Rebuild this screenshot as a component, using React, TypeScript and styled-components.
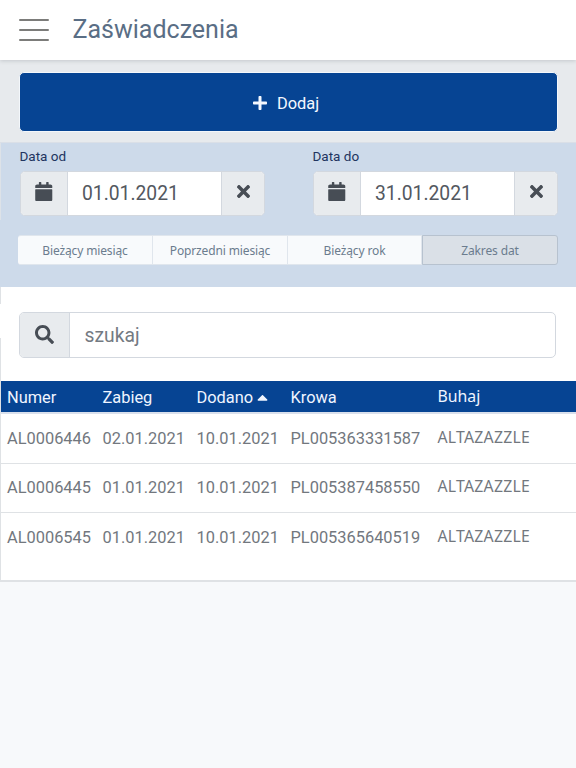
import React from "react";
import styled, { createGlobalStyle } from "styled-components";
import { FaPlus, FaTimes, FaSearch, FaCalendar, FaCaretUp } from "react-icons/fa";

const GlobalStyle = createGlobalStyle`
  *, *::before, *::after { box-sizing: border-box; }
  body {
    margin: 0;
    background: #f7f9fb;
    font-family: Roboto, "Noto Sans", sans-serif;
    color: #72777e;
  }
  button, input { font: inherit; margin: 0; }
`;

const Page = styled.div`
  min-height: 768px;
  overflow: hidden;
`;

const TopBar = styled.header`
  position: relative;
  height: 60px;
  padding-left: 19px;
  display: flex;
  align-items: center;
  gap: 23.5px;
  background: #fff;
  box-shadow: 0 1px 4px rgba(60, 65, 75, 0.2);
`;

const MenuButton = styled.button`
  width: 30px;
  height: 22px;
  padding: 0;
  border: 0;
  background: none;
  display: flex;
  flex-direction: column;
  justify-content: space-between;
`;

const MenuLine = styled.span`
  height: 2.4px;
  border-radius: 1px;
  background: #7c7c7a;
`;

const Title = styled.h1`
  margin: 0 0 1px;
  font-size: 25px;
  line-height: 32px;
  font-weight: 400;
  color: #5a6e85;
`;

const ActionBar = styled.section`
  height: 82px;
  padding: 12px 18px 10px 19px;
  background: #e7eaed;
`;

const AddButton = styled.button`
  width: 100%;
  height: 60px;
  display: flex;
  align-items: center;
  justify-content: center;
  gap: 9px;
  padding: 2px 6px 0 0;
  border: 1px solid #f3f7fb;
  border-radius: 5px;
  background: #064493;
  color: #f4f8ff;
  font-size: 16.4px;
`;

const Filters = styled.section`
  height: 145px;
  padding: 5px 18px 0;
  border-top: 1px solid #dadfe7;
  background:
    linear-gradient(#dde2e8, #dde2e8) 0 0 / 1px 77px no-repeat,
    #cddaea;
`;

const Dates = styled.div`
  display: grid;
  grid-template-columns: 245.5px 245.5px;
  column-gap: 47.5px;
  padding-left: 1.5px;
`;

const DateLabel = styled.label`
  display: block;
  height: 23px;
  line-height: 16px;
  font-size: 13.5px;
  color: #21345f;
`;

const InputGroup = styled.div<{ $tall?: boolean }>`
  display: flex;
  height: ${(p) => (p.$tall ? "46px" : "45px")};
  border: ${(p) => (p.$tall ? "1.5px" : "1px")} solid #d3d8df;
  border-radius: 5px;
  overflow: hidden;
  background: #fff;
`;

const Addon = styled.span<{ $width: number; $lift?: number; $end?: boolean }>`
  flex: 0 0 ${(p) => p.$width}px;
  display: flex;
  align-items: center;
  justify-content: center;
  padding-bottom: ${(p) => p.$lift ?? 0}px;
  background: #e8ebee;
  color: #474d55;
  border-${(p) => (p.$end ? "left" : "right")}: 1px solid #d3d8df;
`;

const Field = styled.input`
  flex: 1;
  min-width: 0;
  padding: 0 14.5px;
  border: 0;
  outline: 0;
  background: transparent;
  color: #53585f;
  font-size: 19.3px;
  &::placeholder { color: #747a82; opacity: 1; }
`;

const Segments = styled.div`
  display: grid;
  grid-template-columns: 135px 135px 134px 136px;
  margin-top: 19px;
  height: 30px;
`;

const Segment = styled.button<{ $active?: boolean }>`
  padding: 1px 0 0;
  font-family: "Noto Sans", "Open Sans", sans-serif;
  font-size: 12px;
  letter-spacing: -0.13px;
  color: #6b7c8e;
  background: ${(p) => (p.$active ? "#dae0e7" : "#f8fafc")};
  border: 1px solid ${(p) => (p.$active ? "#b7c2cf" : "#e0e6ed")};
  border-left-width: ${(p) => (p.$active ? "1px" : "0")};
  &:first-child { border-radius: 3px 0 0 3px; }
  &:last-child { border-radius: 0 3px 3px 0; }
`;

const Results = styled.section`
  height: 295px;
  border-bottom: 2px solid #dfe2e5;
  background:
    linear-gradient(#dfe2e5, #dfe2e5) 0 0 / 1px 17px no-repeat,
    linear-gradient(#dfe2e5, #dfe2e5) 0 51px / 1px 244px no-repeat,
    #fff;
`;

const Search = styled.div`
  padding: 25px 20px 23px 19px;
`;

const Table = styled.table`
  width: 575px;
  margin-left: 1px;
  border-collapse: separate;
  border-spacing: 0;
  table-layout: fixed;
`;

const HeadCell = styled.th<{ $alt?: boolean }>`
  height: 33px;
  padding: ${(p) => (p.$alt ? "0 0 2px 7px" : "2px 0 0 6px")};
  border-bottom: 2px solid #d9e0ec;
  background: #064493;
  color: #f0f5ff;
  text-align: left;
  white-space: nowrap;
  line-height: 20px;
  font-family: ${(p) => (p.$alt ? '"Noto Sans", sans-serif' : "Roboto, sans-serif")};
  font-size: ${(p) => (p.$alt ? "15.8px" : "16.4px")};
  font-weight: 400;
  svg { margin-left: 1px; vertical-align: -3px; }
`;

const Row = styled.tr`
  &:last-child td { border-bottom: 0; }
`;

const Cell = styled.td<{ $alt?: boolean }>`
  height: 49.5px;
  padding: ${(p) => (p.$alt ? "0 0 3px 7px" : "0 0 0 6px")};
  border-bottom: 1px solid #dfe2e5;
  white-space: nowrap;
  font-family: ${(p) => (p.$alt ? '"Noto Sans", sans-serif' : "Roboto, sans-serif")};
  font-size: ${(p) => (p.$alt ? "15.8px" : "16.4px")};
  letter-spacing: ${(p) => (p.$alt ? "0.25px" : "0")};
`;

const dates = [
  { label: "Data od", value: "01.01.2021" },
  { label: "Data do", value: "31.01.2021" },
];

const ranges = ["Bieżący miesiąc", "Poprzedni miesiąc", "Bieżący rok", "Zakres dat"];

const columns = [
  { name: "Numer", width: 95.5 },
  { name: "Zabieg", width: 94 },
  { name: "Dodano", width: 94, sorted: true },
  { name: "Krowa", width: 146 },
  { name: "Buhaj", width: 145.5 },
];

const rows = [
  ["AL0006446", "02.01.2021", "10.01.2021", "PL005363331587", "ALTAZAZZLE"],
  ["AL0006445", "01.01.2021", "10.01.2021", "PL005387458550", "ALTAZAZZLE"],
  ["AL0006545", "01.01.2021", "10.01.2021", "PL005365640519", "ALTAZAZZLE"],
];

export default function App() {
  return (
    <Page>
      <GlobalStyle />
      <TopBar>
        <MenuButton aria-label="Menu">
          <MenuLine />
          <MenuLine />
          <MenuLine />
        </MenuButton>
        <Title>Zaświadczenia</Title>
      </TopBar>
      <ActionBar>
        <AddButton>
          <FaPlus size={16} />
          Dodaj
        </AddButton>
      </ActionBar>
      <Filters>
        <Dates>
          {dates.map((d) => (
            <div key={d.label}>
              <DateLabel>{d.label}</DateLabel>
              <InputGroup>
                <Addon $width={47} $lift={4}>
                  <FaCalendar size={19.5} />
                </Addon>
                <Field defaultValue={d.value} />
                <Addon $width={43} $lift={5} $end>
                  <FaTimes size={19} />
                </Addon>
              </InputGroup>
            </div>
          ))}
        </Dates>
        <Segments>
          {ranges.map((r) => (
            <Segment key={r} $active={r === "Zakres dat"}>
              {r}
            </Segment>
          ))}
        </Segments>
      </Filters>
      <Results>
        <Search>
          <InputGroup $tall>
            <Addon $width={50} $lift={1}>
              <FaSearch size={19} />
            </Addon>
            <Field placeholder="szukaj" />
          </InputGroup>
        </Search>
        <Table>
          <colgroup>
            {columns.map((c) => (
              <col key={c.name} width={c.width} />
            ))}
          </colgroup>
          <thead>
            <tr>
              {columns.map((c, i) => (
                <HeadCell key={c.name} $alt={i === 4}>
                  {c.name}
                  {c.sorted && <FaCaretUp size={17} />}
                </HeadCell>
              ))}
            </tr>
          </thead>
          <tbody>
            {rows.map((r) => (
              <Row key={r[0]}>
                {r.map((v, i) => (
                  <Cell key={i} $alt={i === 4}>
                    {v}
                  </Cell>
                ))}
              </Row>
            ))}
          </tbody>
        </Table>
      </Results>
    </Page>
  );
}
